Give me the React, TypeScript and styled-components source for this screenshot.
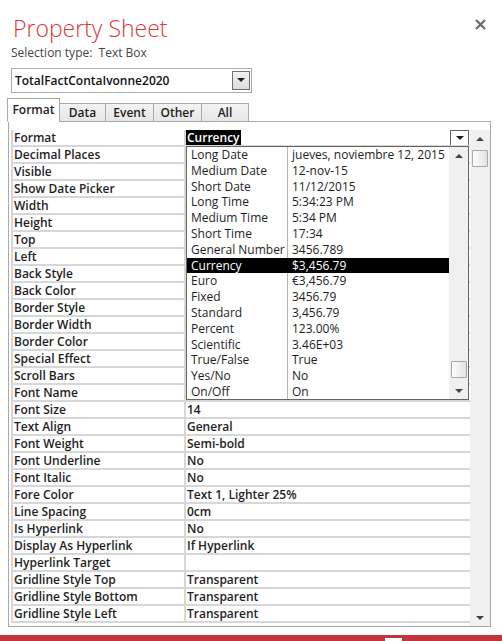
import React from 'react';
import styled, { createGlobalStyle } from 'styled-components';

const GlobalStyle = createGlobalStyle`
  html, body {
    margin: 0;
    padding: 0;
    background: #ffffff;
  }
  body {
    font-family: "Open Sans", "Noto Sans", sans-serif;
    color: #1e1e1e;
  }
  * {
    box-sizing: border-box;
  }
`;

const Window = styled.div`
  width: 502px;
  height: 641px;
  display: flex;
  flex-direction: column;
  overflow: hidden;
  background: #ffffff;
`;

const Header = styled.header`
  display: flex;
  justify-content: space-between;
  align-items: flex-start;
  padding: 13px 16px 0 13px;
`;

const Title = styled.h1`
  margin: 0;
  font-size: 23px;
  font-weight: 300;
  line-height: 30px;
  color: #d9383a;
`;

const CloseButton = styled.button`
  border: none;
  background: none;
  padding: 0;
  margin-top: 5px;
  width: 12px;
  height: 12px;
  display: flex;
  align-items: center;
  justify-content: center;
`;

const SelectionType = styled.div`
  margin: 2px 0 0 11px;
  font-size: 12px;
  line-height: 16px;
  color: #444444;
`;

const Combo = styled.div`
  margin: 7px 0 0 11px;
  width: 241px;
  height: 25px;
  border: 1px solid #ababab;
  display: flex;
  align-items: center;
  justify-content: space-between;
  padding: 0 1px 0 3px;
  font-size: 12px;
  font-weight: 600;
  color: #111111;
`;

const ComboButton = styled.div`
  width: 18px;
  height: 19px;
  border: 1px solid #707070;
  background: linear-gradient(#f2f2f2, #dcdcdc);
  display: flex;
  align-items: center;
  justify-content: center;
`;

const Tabs = styled.nav`
  display: flex;
  align-items: flex-end;
  margin: 5px 0 -1px 7px;
  position: relative;
  z-index: 1;
`;

const Tab = styled.div<{ $active?: boolean; $w: number }>`
  width: ${({ $w }) => $w}px;
  height: ${({ $active }) => ($active ? 24 : 19)}px;
  margin-right: -1px;
  border: 1px solid #a9a9a9;
  border-bottom: ${({ $active }) => ($active ? '1px solid #ffffff' : '1px solid #a9a9a9')};
  background: ${({ $active }) =>
    $active ? '#ffffff' : 'linear-gradient(#f3f3f3, #e6e6e6)'};
  display: flex;
  align-items: center;
  justify-content: center;
  font-size: 12px;
  font-weight: 600;
  color: #1e1e1e;
  padding-bottom: ${({ $active }) => ($active ? 2 : 0)}px;
`;

const Panel = styled.section`
  margin-left: 8px;
  width: 483px;
  height: 506px;
  border: 1px solid #a9a9a9;
  padding: 8px 0 0 2px;
  display: flex;
  overflow: hidden;
`;

const Grid = styled.div`
  position: relative;
  flex: 1;
`;

const Row = styled.div`
  display: grid;
  grid-template-columns: 175px 1fr;
  height: 17px;
  font-size: 12px;
  font-weight: 600;
  line-height: 15px;
`;

const Label = styled.div`
  border-left: 2px solid #d7d7d7;
  border-right: 2px solid #d7d7d7;
  border-bottom: 2px solid #d7d7d7;
  padding-left: 1px;
  white-space: nowrap;
  overflow: hidden;
`;

const Value = styled.div`
  border-bottom: 2px solid #d7d7d7;
  display: flex;
  align-items: flex-start;
  justify-content: space-between;
  white-space: nowrap;
  overflow: hidden;
`;

const ValueText = styled.span<{ $selected?: boolean }>`
  padding: 0 1px 0 1px;
  background: ${({ $selected }) => ($selected ? '#000000' : 'transparent')};
  color: ${({ $selected }) => ($selected ? '#ffffff' : 'inherit')};
`;

const RowButton = styled.div`
  width: 19px;
  height: 17px;
  border: 1px solid #646464;
  background: #ffffff;
  display: flex;
  align-items: center;
  justify-content: center;
  margin-right: 1px;
`;

const Scrollbar = styled.div<{ $w: number }>`
  width: ${({ $w }) => $w}px;
  background: #f0f0f0;
  display: flex;
  flex-direction: column;
  align-items: center;
`;

const Arrow = styled.div`
  height: 16px;
  width: 100%;
  display: flex;
  align-items: center;
  justify-content: center;
`;

const Track = styled.div<{ $end?: boolean }>`
  flex: 1;
  width: 100%;
  display: flex;
  flex-direction: column;
  align-items: center;
  justify-content: ${({ $end }) => ($end ? 'flex-end' : 'flex-start')};
  padding: ${({ $end }) => ($end ? '0 0 5px' : '4px 0 0')};
`;

const Thumb = styled.div`
  width: 16px;
  height: 17px;
  border: 1px solid #a8a8a8;
  border-radius: 1px;
  background: linear-gradient(90deg, #fdfdfd, #e2e2e2);
`;

const Dropdown = styled.div`
  position: absolute;
  left: 175px;
  top: 16px;
  width: 283px;
  height: 254px;
  border: 1px solid #646464;
  background: #ffffff;
  display: flex;
  z-index: 2;
`;

const List = styled.ul`
  flex: 1;
  margin: 0;
  padding: 0;
  list-style: none;
  position: relative;
  &::before {
    content: '';
    position: absolute;
    left: 100px;
    top: 0;
    bottom: 0;
    width: 1px;
    background: #b4b4b4;
  }
`;

const Item = styled.li<{ $selected?: boolean }>`
  display: grid;
  grid-template-columns: 101px 1fr;
  height: 15.8px;
  line-height: 15.8px;
  font-size: 12px;
  white-space: nowrap;
  background: ${({ $selected }) => ($selected ? '#000000' : 'transparent')};
  color: ${({ $selected }) => ($selected ? '#ffffff' : '#1e1e1e')};
  position: relative;
  z-index: 1;
`;

const ItemName = styled.span`
  padding-left: 4px;
`;

const ItemSample = styled.span`
  padding-left: 4px;
  overflow: hidden;
`;

const StatusBar = styled.footer`
  margin-top: auto;
  height: 6px;
  background: #c4343c;
  display: flex;
  align-items: flex-end;
  padding-left: 385px;
`;

const StatusMark = styled.div`
  width: 17px;
  height: 3px;
  background: #ffffff;
`;

const Tri = ({ up, color = '#1e1e1e' }: { up?: boolean; color?: string }) => (
  <svg width="8" height="5" viewBox="0 0 8 5">
    <path d={up ? 'M0 5 L4 1 L8 5 Z' : 'M0 0 L8 0 L4 4 Z'} fill={color} />
  </svg>
);

const properties: [string, string][] = [
  ['Format', 'Currency'],
  ['Decimal Places', ''],
  ['Visible', ''],
  ['Show Date Picker', ''],
  ['Width', ''],
  ['Height', ''],
  ['Top', ''],
  ['Left', ''],
  ['Back Style', ''],
  ['Back Color', ''],
  ['Border Style', ''],
  ['Border Width', ''],
  ['Border Color', ''],
  ['Special Effect', ''],
  ['Scroll Bars', ''],
  ['Font Name', ''],
  ['Font Size', '14'],
  ['Text Align', 'General'],
  ['Font Weight', 'Semi-bold'],
  ['Font Underline', 'No'],
  ['Font Italic', 'No'],
  ['Fore Color', 'Text 1, Lighter 25%'],
  ['Line Spacing', '0cm'],
  ['Is Hyperlink', 'No'],
  ['Display As Hyperlink', 'If Hyperlink'],
  ['Hyperlink Target', ''],
  ['Gridline Style Top', 'Transparent'],
  ['Gridline Style Bottom', 'Transparent'],
  ['Gridline Style Left', 'Transparent'],
];

const formats: [string, string][] = [
  ['Long Date', 'jueves, noviembre 12, 2015'],
  ['Medium Date', '12-nov-15'],
  ['Short Date', '11/12/2015'],
  ['Long Time', '5:34:23 PM'],
  ['Medium Time', '5:34 PM'],
  ['Short Time', '17:34'],
  ['General Number', '3456.789'],
  ['Currency', '$3,456.79'],
  ['Euro', '€3,456.79'],
  ['Fixed', '3456.79'],
  ['Standard', '3,456.79'],
  ['Percent', '123.00%'],
  ['Scientific', '3.46E+03'],
  ['True/False', 'True'],
  ['Yes/No', 'No'],
  ['On/Off', 'On'],
];

const tabs: [string, number][] = [
  ['Format', 53],
  ['Data', 47],
  ['Event', 49],
  ['Other', 49],
  ['All', 48],
];

export default function App() {
  return (
    <Window>
      <GlobalStyle />
      <Header>
        <Title>Property Sheet</Title>
        <CloseButton aria-label="Close">
          <svg width="11" height="11" viewBox="0 0 11 11">
            <path d="M1 1 L10 10 M10 1 L1 10" stroke="#6a6a6a" strokeWidth="2.2" />
          </svg>
        </CloseButton>
      </Header>
      <SelectionType>Selection type:&nbsp; Text Box</SelectionType>
      <Combo>
        <span>TotalFactContaIvonne2020</span>
        <ComboButton>
          <Tri />
        </ComboButton>
      </Combo>
      <Tabs>
        {tabs.map(([name, w], i) => (
          <Tab key={name} $w={w} $active={i === 0}>
            {name}
          </Tab>
        ))}
      </Tabs>
      <Panel>
        <Grid>
          {properties.map(([label, value], i) => (
            <Row key={label}>
              <Label>{label}</Label>
              <Value>
                <ValueText $selected={i === 0}>{value}</ValueText>
                {i === 0 && (
                  <RowButton>
                    <Tri />
                  </RowButton>
                )}
              </Value>
            </Row>
          ))}
          <Dropdown>
            <List>
              {formats.map(([name, sample]) => (
                <Item key={name} $selected={name === 'Currency'}>
                  <ItemName>{name}</ItemName>
                  <ItemSample>{sample}</ItemSample>
                </Item>
              ))}
            </List>
            <Scrollbar $w={19}>
              <Arrow>
                <Tri up color="#444" />
              </Arrow>
              <Track $end>
                <Thumb />
              </Track>
              <Arrow>
                <Tri color="#444" />
              </Arrow>
            </Scrollbar>
          </Dropdown>
        </Grid>
        <Scrollbar $w={20}>
          <Arrow>
            <Tri up color="#444" />
          </Arrow>
          <Track>
            <Thumb />
          </Track>
          <Arrow>
            <Tri color="#444" />
          </Arrow>
        </Scrollbar>
      </Panel>
      <StatusBar>
        <StatusMark />
      </StatusBar>
    </Window>
  );
}
